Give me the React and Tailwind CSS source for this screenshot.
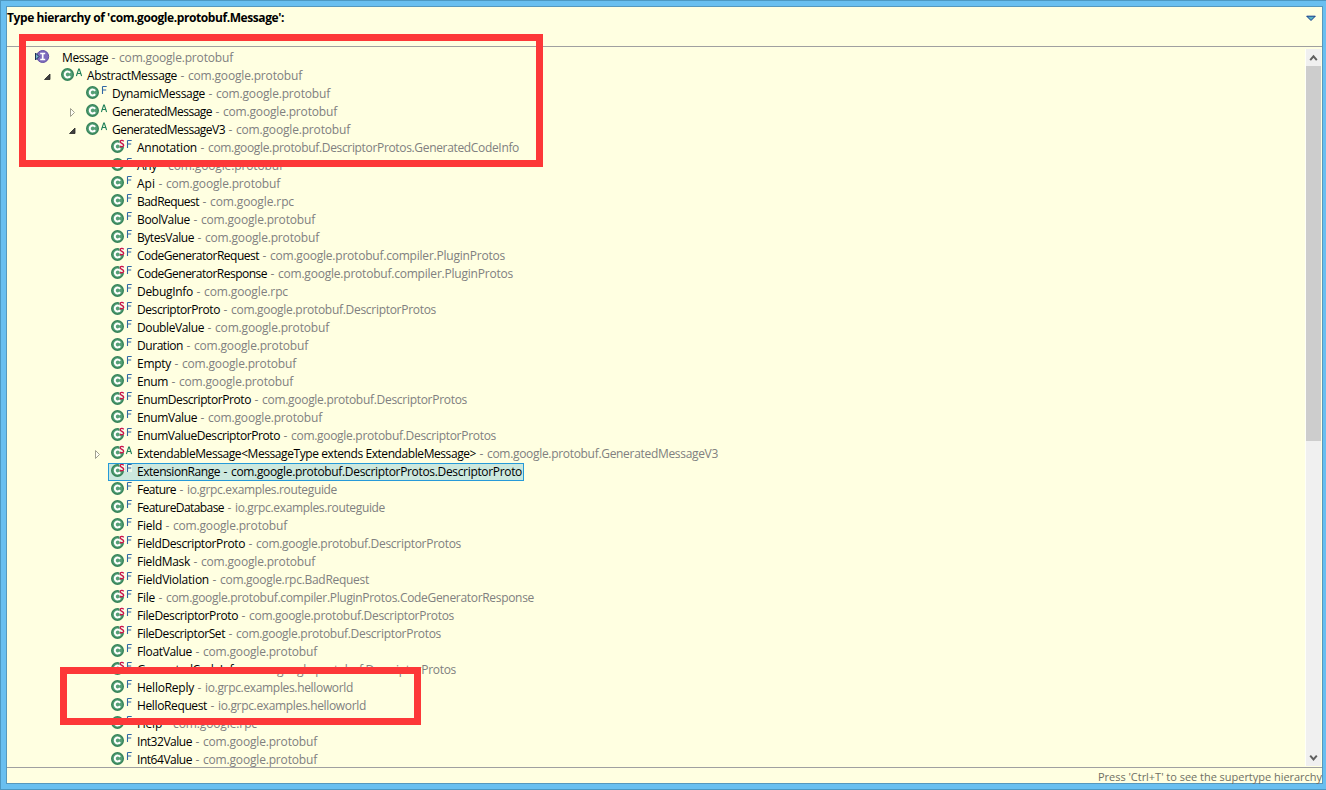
import React from 'react';

// level: indent depth, s: static nested type, m: modifier letter, w: width of the type name, pw: width of the package part
const TYPES = [
    { level: 0, kind: 'interface', name: 'Message', pkg: 'com.google.protobuf', w: 46, pw: 125 },
    { level: 1, m: 'A', open: true, name: 'AbstractMessage', pkg: 'com.google.protobuf', w: 90, pw: 125 },
    { level: 2, m: 'F', name: 'DynamicMessage', pkg: 'com.google.protobuf', w: 93, pw: 125 },
    { level: 2, m: 'A', open: false, name: 'GeneratedMessage', pkg: 'com.google.protobuf', w: 100, pw: 125 },
    { level: 2, m: 'A', open: true, name: 'GeneratedMessageV3', pkg: 'com.google.protobuf', w: 113, pw: 125 },
    { level: 3, m: 'F', s: true, name: 'Annotation', pkg: 'com.google.protobuf.DescriptorProtos.GeneratedCodeInfo', w: 60, pw: 322 },
    { level: 3, m: 'F', name: 'Any', pkg: 'com.google.protobuf', w: 20, pw: 126 },
    { level: 3, m: 'F', name: 'Api', pkg: 'com.google.protobuf', w: 18, pw: 125 },
    { level: 3, m: 'F', name: 'BadRequest', pkg: 'com.google.rpc', w: 62, pw: 95 },
    { level: 3, m: 'F', name: 'BoolValue', pkg: 'com.google.protobuf', w: 53, pw: 125 },
    { level: 3, m: 'F', name: 'BytesValue', pkg: 'com.google.protobuf', w: 57, pw: 125 },
    { level: 3, m: 'F', s: true, name: 'CodeGeneratorRequest', pkg: 'com.google.protobuf.compiler.PluginProtos', w: 122, pw: 246 },
    { level: 3, m: 'F', s: true, name: 'CodeGeneratorResponse', pkg: 'com.google.protobuf.compiler.PluginProtos', w: 130, pw: 246 },
    { level: 3, m: 'F', name: 'DebugInfo', pkg: 'com.google.rpc', w: 56, pw: 95 },
    { level: 3, m: 'F', s: true, name: 'DescriptorProto', pkg: 'com.google.protobuf.DescriptorProtos', w: 83, pw: 216 },
    { level: 3, m: 'F', name: 'DoubleValue', pkg: 'com.google.protobuf', w: 67, pw: 125 },
    { level: 3, m: 'F', name: 'Duration', pkg: 'com.google.protobuf', w: 46, pw: 125 },
    { level: 3, m: 'F', name: 'Empty', pkg: 'com.google.protobuf', w: 34, pw: 125 },
    { level: 3, m: 'F', name: 'Enum', pkg: 'com.google.protobuf', w: 31, pw: 125 },
    { level: 3, m: 'F', s: true, name: 'EnumDescriptorProto', pkg: 'com.google.protobuf.DescriptorProtos', w: 114, pw: 216 },
    { level: 3, m: 'F', name: 'EnumValue', pkg: 'com.google.protobuf', w: 60, pw: 125 },
    { level: 3, m: 'F', s: true, name: 'EnumValueDescriptorProto', pkg: 'com.google.protobuf.DescriptorProtos', w: 143, pw: 216 },
    { level: 3, m: 'A', s: true, open: false, name: 'ExtendableMessage<MessageType extends ExtendableMessage>', pkg: 'com.google.protobuf.GeneratedMessageV3', w: 339, pw: 242 },
    { level: 3, m: 'F', s: true, selected: true, name: 'ExtensionRange', pkg: 'com.google.protobuf.DescriptorProtos.DescriptorProto', w: 83, pw: 302 },
    { level: 3, m: 'F', name: 'Feature', pkg: 'io.grpc.examples.routeguide', w: 39, pw: 161 },
    { level: 3, m: 'F', name: 'FeatureDatabase', pkg: 'io.grpc.examples.routeguide', w: 87, pw: 161 },
    { level: 3, m: 'F', name: 'Field', pkg: 'com.google.protobuf', w: 25, pw: 125 },
    { level: 3, m: 'F', s: true, name: 'FieldDescriptorProto', pkg: 'com.google.protobuf.DescriptorProtos', w: 108, pw: 216 },
    { level: 3, m: 'F', name: 'FieldMask', pkg: 'com.google.protobuf', w: 53, pw: 125 },
    { level: 3, m: 'F', s: true, name: 'FieldViolation', pkg: 'com.google.rpc.BadRequest', w: 72, pw: 160 },
    { level: 3, m: 'F', s: true, name: 'File', pkg: 'com.google.protobuf.compiler.PluginProtos.CodeGeneratorResponse', w: 18, pw: 379 },
    { level: 3, m: 'F', s: true, name: 'FileDescriptorProto', pkg: 'com.google.protobuf.DescriptorProtos', w: 101, pw: 216 },
    { level: 3, m: 'F', s: true, name: 'FileDescriptorSet', pkg: 'com.google.protobuf.DescriptorProtos', w: 88, pw: 216 },
    { level: 3, m: 'F', name: 'FloatValue', pkg: 'com.google.protobuf', w: 55, pw: 125 },
    { level: 3, m: 'F', s: true, name: 'GeneratedCodeInfo', pkg: 'com.google.protobuf.DescriptorProtos', w: 103, pw: 216 },
    { level: 3, m: 'F', name: 'HelloReply', pkg: 'io.grpc.examples.helloworld', w: 57, pw: 159 },
    { level: 3, m: 'F', name: 'HelloRequest', pkg: 'io.grpc.examples.helloworld', w: 70, pw: 159 },
    { level: 3, m: 'F', name: 'Help', pkg: 'com.google.rpc', w: 25, pw: 95 },
    { level: 3, m: 'F', name: 'Int32Value', pkg: 'com.google.protobuf', w: 55, pw: 125 },
    { level: 3, m: 'F', name: 'Int64Value', pkg: 'com.google.protobuf', w: 55, pw: 125 },
];

const INDENT = ['pl-[2px]', 'pl-[27px]', 'pl-[52px]', 'pl-[77px]'];

// Text squeezed or stretched by letter spacing so that it fills a fixed width
function FitText({ width, className = '', children }) {
    const ref = React.useRef(null);
    const [spacing, setSpacing] = React.useState(0);

    React.useLayoutEffect(() => {
        const natural = ref.current.getBoundingClientRect().width;
        setSpacing((width - natural) / children.length);
    }, [width, children]);

    return (
        <span ref={ref} className={`whitespace-pre ${className}`} style={{ letterSpacing: `${spacing}px` }}>
            {children}
        </span>
    );
}

function Expander({ open }) {
    if (open === undefined) return <span className="w-4 shrink-0" />;
    return (
        <svg className="w-4 h-[18px] shrink-0" viewBox="0 0 16 18">
            {open ? (
                <path d="M8 7v5.5H2.5z" fill="#404040" stroke="#262626" strokeWidth="0.8" />
            ) : (
                <path d="M3.5 5.5v8l4-4z" fill="#fffff4" stroke="#a0a090" />
            )}
        </svg>
    );
}

function ClassIcon({ modifier, isStatic, selected }) {
    return (
        <svg className="w-[26px] h-[18px] shrink-0" viewBox="0 0 26 18">
            <circle cx="6.5" cy="7.5" r="5.8" fill="#55a076" stroke="#37845a" strokeWidth="1.4" />
            <path d="M9.1 5.9A2.9 2.9 0 1 0 9.1 9.1" fill="none" stroke="#fff" strokeWidth="2" />
            {isStatic && (
                <>
                    <path d="M8.5 0H14v8H8.5z" fill="#fffff0" opacity="0.85" />
                    <path d="M12.7 2.3C11.8 1 9.2 1.1 9.2 2.8s3.5 1.6 3.5 3.4S9.8 8.2 8.9 7" fill="none" stroke="#cc1448" strokeWidth="1.3" />
                </>
            )}
            {selected && <path d="M15 1h6v8h-6z" fill="#eef8ea" />}
            {modifier === 'A' ? (
                <path d="M15.4 9l2.3-7h.6l2.3 7M16.3 6.5h3.4" fill="none" stroke="#1f8058" strokeWidth="1.1" />
            ) : (
                <path d="M16.5 9V1.5M16.5 1.5h4.2M16.5 5h3.7" fill="none" stroke="#2f66a4" strokeWidth="1.1" />
            )}
        </svg>
    );
}

function InterfaceIcon() {
    return (
        <svg className="w-[26px] h-[18px] shrink-0 overflow-visible" viewBox="0 0 26 18">
            <circle cx="6.7" cy="7.5" r="6" fill="#7e6cbc" stroke="#6250a4" strokeWidth="1" />
            <path d="M4.2 4.5h5M4.2 10.5h5M6.7 4.5v6" fill="none" stroke="#fff" strokeWidth="1.7" />
            <path d="M-.5 4v7l3.5-3.5z" fill="#79b6c8" stroke="#1a3058" />
        </svg>
    );
}

function TypeRow({ item }) {
    const pkgColor = item.selected ? 'text-black' : 'text-[#808080]';

    return (
        <div className={`flex h-[18px] shrink-0 ${INDENT[item.level]}`}>
            <Expander open={item.open} />
            <div
                className={`flex h-[18px] pl-[3px] pr-[2px] ${
                    item.selected ? 'bg-[#cce8de] outline outline-1 -outline-offset-1 outline-[#269ad8]' : ''
                }`}
            >
                {item.kind === 'interface' ? (
                    <InterfaceIcon />
                ) : (
                    <ClassIcon modifier={item.m} isStatic={item.s} selected={item.selected} />
                )}
                <FitText width={item.w}>{item.name}</FitText>
                <FitText width={11} className={pkgColor}>{' - '}</FitText>
                <FitText width={item.pw - 11} className={pkgColor}>{item.pkg}</FitText>
            </div>
        </div>
    );
}

export default function App() {
    return (
        <div className="relative flex w-[1326px] h-[790px] overflow-hidden border-t border-l border-b border-[#4d98c2] bg-[#69bff0] pt-[5px] pl-[5px] pr-[3px] pb-[5px] font-['Open_Sans','Noto_Sans',sans-serif] text-[12px] leading-[18px] text-black">
            <div className="flex flex-1 min-w-0 flex-col border border-[#5698bd] bg-[#ffffe1]">
                <header className="flex h-[39px] shrink-0 justify-between">
                    <div className="font-bold pt-[2px]">
                        <FitText width={277}>{"Type hierarchy of 'com.google.protobuf.Message':"}</FitText>
                    </div>
                    <svg className="mt-[8px] mr-[6px] w-[10px] h-[7px]" viewBox="0 0 10 7">
                        <path d="M.7 1.2h8.6L5 5.5z" fill="#58b4c4" stroke="#10388c" />
                    </svg>
                </header>

                <main className="flex h-[722px] shrink-0 overflow-hidden border-y border-[#a0a0a0]">
                    <div className="flex flex-1 flex-col overflow-hidden pt-[2px] pl-[8px]">
                        {TYPES.map((item) => (
                            <TypeRow key={item.name} item={item} />
                        ))}
                    </div>
                    <div className="mt-[2px] mb-[1px] mr-px flex w-4 flex-col border-l border-[#fffff8] bg-[#f0f0f0]">
                        <svg className="h-[17px] w-[15px]" viewBox="0 0 15 17">
                            <path d="M4.2 11.2l3.3-3.8 3.3 3.8" fill="none" stroke="#606060" strokeWidth="2" />
                        </svg>
                        <div className="h-[375px] bg-[#cdcdcd]" />
                        <svg className="mt-auto h-[17px] w-[15px]" viewBox="0 0 15 17">
                            <path d="M4.2 6.7l3.3 3.8 3.3-3.8" fill="none" stroke="#606060" strokeWidth="2" />
                        </svg>
                    </div>
                </main>

                <footer className="flex flex-1 justify-end text-[11px] leading-[18px] text-[#6f6f64]">
                    <FitText width={224}>{"Press 'Ctrl+T' to see the supertype hierarchy"}</FitText>
                </footer>
            </div>

            {/* highlight frames over the tree */}
            <div className="absolute left-[18px] top-[33px] h-[133px] w-[524px] border-[7px] border-[#fd3838]" />
            <div className="absolute left-[59px] top-[666px] h-[58px] w-[361px] border-[7px] border-[#fd3838]" />
        </div>
    );
}
